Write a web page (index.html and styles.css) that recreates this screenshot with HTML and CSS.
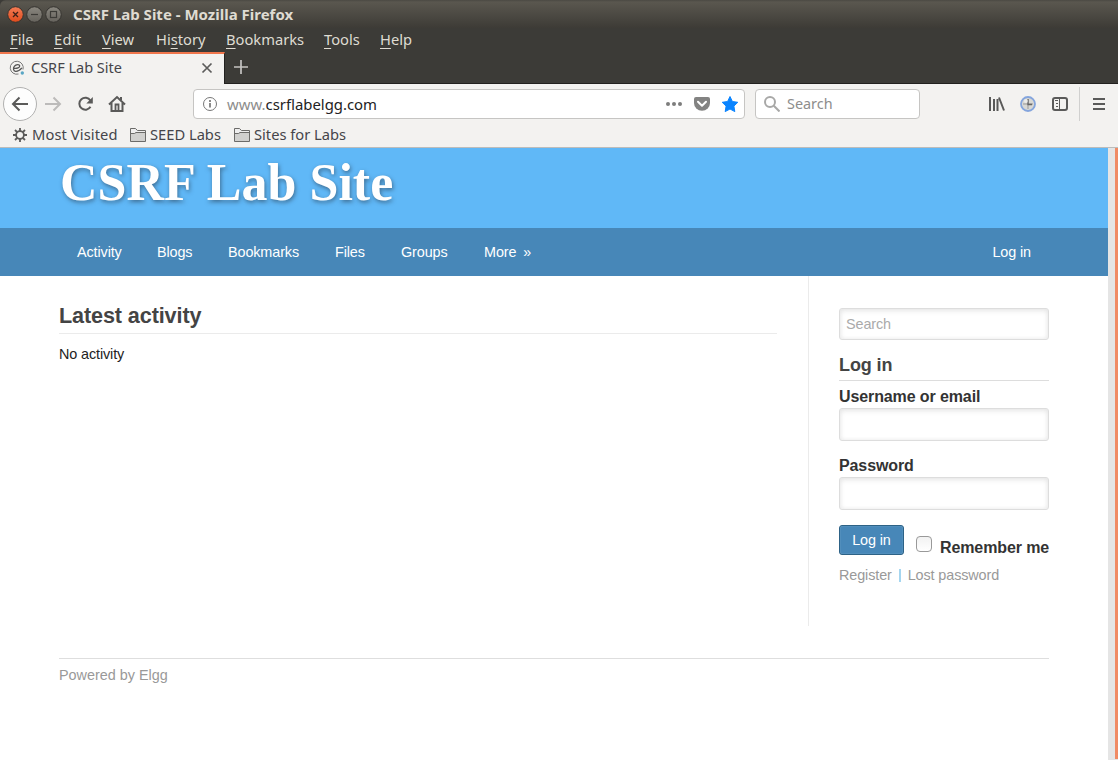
FILE: index.html
```html
<!DOCTYPE html>
<html lang="en">
<head>
<meta charset="utf-8">
<title>CSRF Lab Site</title>
<link rel="stylesheet" href="styles.css">
</head>
<body>
<div class="window">
  <header class="titlebar">
    <svg class="controls" width="60" height="20" viewBox="0 0 60 20">
      <defs>
        <linearGradient id="close" x1="0" y1="0" x2="0" y2="1"><stop offset="0" stop-color="#f47c55"/><stop offset="1" stop-color="#df4b1c"/></linearGradient>
        <linearGradient id="grey" x1="0" y1="0" x2="0" y2="1"><stop offset="0" stop-color="#8b8880"/><stop offset="1" stop-color="#65625c"/></linearGradient>
      </defs>
      <circle cx="11.500" cy="10.500" r="7.800" fill="url(#close)" stroke="#35332f"/>
      <path d="M9 8l5 5M14 8l-5 5" stroke="#3c2018" stroke-width="1.300"/>
      <circle cx="30.500" cy="10.500" r="7.800" fill="url(#grey)" stroke="#35332f"/>
      <path d="M27 10.500h7" stroke="#3c3b37" stroke-width="1.200"/>
      <circle cx="49.500" cy="10.500" r="7.800" fill="url(#grey)" stroke="#35332f"/>
      <rect x="46.500" y="7.500" width="6" height="6" fill="none" stroke="#3c3b37" stroke-width="1.200"/>
    </svg>
    <span class="window-title">CSRF Lab Site - Mozilla Firefox</span>
  </header>
  <nav class="menubar">
    <span class="m-file"><u>F</u>ile</span><span class="m-edit"><u>E</u>dit</span><span class="m-view"><u>V</u>iew</span><span class="m-history">Hi<u>s</u>tory</span><span class="m-bookmarks"><u>B</u>ookmarks</span><span class="m-tools"><u>T</u>ools</span><span class="m-help"><u>H</u>elp</span>
  </nav>
  <div class="tabs">
    <div class="tab">
      <svg width="16" height="16" viewBox="0 0 16 16" fill="none">
        <path d="M14 9.500A6.500 6.500 0 1 0 9.500 14" stroke="#777" stroke-width="1"/>
        <path d="M5 8.300c3 .5 6-.7 5.700-2.500C10.400 4 7 4.300 5.500 6.200 3.800 8.300 4.300 11 6.500 11.300c2.300.3 4.500-1.300 6.400-3.500" stroke="#555" stroke-width="1.300"/>
        <circle cx="13.300" cy="13" r="1.700" fill="#5aa6c4"/>
      </svg>
      <span class="tab-title">CSRF Lab Site</span>
      <svg width="12" height="12" viewBox="0 0 12 12"><path d="M1.500 1.500l9 9M10.500 1.500l-9 9" stroke="#5c5c5b" stroke-width="1.700"/></svg>
    </div>
    <svg class="new-tab" width="14" height="14" viewBox="0 0 14 14"><path d="M7 0v14M0 7h14" stroke="#c5c4c1" stroke-width="1.700"/></svg>
  </div>
  <div class="toolbar">
    <svg class="nav-icons" width="132" height="38" viewBox="0 0 132 38" fill="none" stroke="#5a5a59" stroke-width="2">
      <circle cx="20" cy="19" r="16.500" fill="#fdfdfd" stroke="#b1b1b0" stroke-width="1"/>
      <path d="M28 19H13M19.500 12.500L13 19l6.500 6.500"/>
      <path d="M45 19h15M53.500 12.500L60 19l-6.500 6.500" stroke="#bcbbba"/>
      <path d="M90.400 15.500A6 6 0 1 0 90.500 21.800"/><path d="M92.800 12v6.500h-6.500z" fill="#5a5a59" stroke="none"/>
      <path d="M109 19.500L117 12l8 7.500M111.500 18v8h11v-8"/><path d="M115.500 26v-6.500h3V26" stroke-width="1.800"/><path d="M121 12v3" stroke-width="2"/>
    </svg>
    <div class="urlbar">
      <svg width="16" height="16" viewBox="0 0 16 16" fill="none"><circle cx="8" cy="8" r="6.500" stroke="#777"/><path d="M8 7v4.500M8 4v2" stroke="#777" stroke-width="1.700"/></svg>
      <span class="url"><span class="sub">www.</span>csrflabelgg.com</span>
      <svg width="76" height="20" viewBox="0 0 76 20">
        <g fill="#7d7d7c"><circle cx="4" cy="10" r="2"/><circle cx="10" cy="10" r="2"/><circle cx="16" cy="10" r="2"/>
        <path d="M32 3h12a2 2 0 0 1 2 2v4a8 7.800 0 0 1-16 0V5a2 2 0 0 1 2-2z" fill="#838382"/></g>
        <path d="M34 7.700l4 4 4-4" fill="none" stroke="#fff" stroke-width="2" stroke-linecap="round" stroke-linejoin="round"/>
        <path d="M66 2.500l2.400 5 5.400.8-3.900 3.800.9 5.500L66 15l-4.800 2.600.9-5.500-3.900-3.800 5.400-.8z" fill="#0a84ff" stroke="#0a84ff" stroke-linejoin="round"/>
      </svg>
    </div>
    <div class="searchbar">
      <svg width="16" height="16" viewBox="0 0 16 16" fill="none" stroke="#a8a8a7" stroke-width="2"><circle cx="6" cy="6" r="5"/><path d="M9.800 9.800l5.700 5.700"/></svg>
      <span>Search</span>
    </div>
    <svg class="actions" width="138" height="34" viewBox="0 0 138 34">
      <path d="M10 10v14M14 12v12M17.500 12v12M19 10.500l5 13" stroke="#5a5a59" stroke-width="2"/>
      <circle cx="48" cy="17" r="7" fill="#d8d8d4" stroke="#84a5dd" stroke-width="1.800"/>
      <path d="M48 12v10M43 17h10" stroke="#999" stroke-width="1"/><path d="M48 12v5.500h4" fill="none" stroke="#666" stroke-width="1.300"/><circle cx="46" cy="14" r="2" fill="#f5f5f2" opacity=".7"/>
      <rect x="73" y="11" width="14" height="12" rx="2" fill="none" stroke="#5a5a59" stroke-width="2"/>
      <path d="M79.500 11v12" stroke="#5a5a59"/><path d="M75 13.500h3M76 16.500h2M76 19.500h2" stroke="#5a5a59"/>
      <path d="M99.500 0v34" stroke="#d0d0cf"/>
      <path d="M113 12h12M113 17h12M113 22h12" stroke="#5a5a59" stroke-width="2"/>
    </svg>
  </div>
  <div class="bookmarks">
    <svg class="gear" width="14" height="14" viewBox="0 0 14 14" fill="none" stroke="#5a5a59"><circle cx="7" cy="7" r="3.900" stroke-width="1.800"/><path d="M7 0v3M7 11v3M0 7h3M11 7h3M2 2l2.200 2.200M9.800 9.800L12 12M12 2L9.800 4.200M4.200 9.800L2 12" stroke-width="1.800"/></svg>
    <span class="b-most">Most Visited</span>
    <svg class="folder" width="16" height="14" viewBox="0 0 16 14"><path d="M.5 13.500V.5h5l2 2h8v11z" fill="#d0d0ce" stroke="#6b6b69"/><path d="M1 1h4.300l2 2H15v1H6L4.500 5H1z" fill="#eee"/><path d="M1 5.500h3.500l1.500-1h9.500" fill="none" stroke="#6b6b69"/></svg>
    <span class="b-seed">SEED Labs</span>
    <svg class="folder" width="16" height="14" viewBox="0 0 16 14"><path d="M.5 13.500V.5h5l2 2h8v11z" fill="#d0d0ce" stroke="#6b6b69"/><path d="M1 1h4.300l2 2H15v1H6L4.500 5H1z" fill="#eee"/><path d="M1 5.500h3.500l1.500-1h9.500" fill="none" stroke="#6b6b69"/></svg>
    <span class="b-sites">Sites for Labs</span>
  </div>
  <div class="viewport">
    <div class="page">
      <div class="banner"><h1>CSRF Lab Site</h1></div>
      <nav class="site-nav">
        <a class="n-activity">Activity</a><a class="n-blogs">Blogs</a><a class="n-bookmarks">Bookmarks</a><a class="n-files">Files</a><a class="n-groups">Groups</a><a class="n-more">More <span class="raquo">»</span></a><a class="login-link">Log in</a>
      </nav>
      <div class="columns">
        <main><h2>Latest activity</h2><p>No activity</p></main>
        <aside>
          <div class="field search">Search</div>
          <h3>Log in</h3>
          <label class="username">Username or email</label>
          <div class="field"></div>
          <label class="password">Password</label>
          <div class="field"></div>
          <div class="submit-row"><span class="button">Log in</span><span class="checkbox"></span><label class="remember">Remember me</label></div>
          <div class="links"><span>Register</span><i></i><span>Lost password</span></div>
        </aside>
      </div>
      <footer>Powered by Elgg</footer>
    </div>
    <div class="scroll"><div class="thumb"></div></div>
  </div>
</div>
</body>
</html>
```
FILE: styles.css
```css
* { box-sizing: border-box; }
body { margin: 0; overflow: hidden; background: #fff; }
svg { display: block; flex: none; }
.window { width: 1118px; height: 760px; display: flex; flex-direction: column; font: 14.7px/20px "Noto Sans", sans-serif; background: #3c3b37; color: #45454a; white-space: nowrap; }

.titlebar { height: 28px; flex: none; display: flex; padding: 4px 0 0 4px; background: linear-gradient(#4b4943, #5a574f 2px, #3d3b36); border-radius: 6px 0 0; }
.window-title { margin-left: 9px; font-size: 15px; font-weight: 700; color: #dfdbd2; }
.menubar { height: 24px; flex: none; display: flex; padding: 1px 0 0 10px; color: #dfdbd2; }
.menubar u { text-underline-offset: 3px; text-decoration-thickness: 1px; }
.m-file { width: 44px; }
.m-edit { width: 48px; letter-spacing: .3px; }
.m-view { width: 54px; }
.m-history { width: 70px; }
.m-bookmarks { width: 98px; }
.m-tools { width: 56px; }

.tabs { height: 32px; flex: none; display: flex; box-shadow: inset 0 -1px #22211f; }
.tab { width: 225px; padding: 0 11px 2px 9px; display: flex; align-items: center; background: #f3f2f0; border-top: 2px solid #f0764c; border-right: 1px solid #22211f; }
.tab-title { flex: 1; margin-left: 6px; padding-bottom: 2px; font-size: 14.5px; }
.new-tab { margin: 8px 0 0 9px; }

.toolbar { height: 39px; flex: none; display: flex; background: #f3f2f0; padding-top: 1px; }
.nav-icons { width: 132px; margin-right: 61px; }
.urlbar, .searchbar { height: 30px; margin-top: 4px; background: #fff; border: 1px solid #c6c5c3; border-radius: 4px; display: flex; align-items: center; }
.urlbar { width: 552px; padding: 0 4px 0 8px; }
.url { flex: 1; margin-left: 9px; color: #222; font-size: 14.9px; }
.sub { color: #8d8d8c; }
.searchbar { width: 165px; margin-left: 10px; padding-left: 8px; color: #8d8d8c; }
.searchbar span { margin-left: 7px; font-size: 14.4px; }
.actions { margin: 2px 0 0 60px; }
.bookmarks { height: 25px; flex: none; display: flex; padding: 1px 0 0 13px; background: #f3f2f0; border-bottom: 1px solid #bcbcbb; }
.gear { margin: 4px 5px 0 0; }
.folder { margin: 4px 4px 0 0; }
.b-most { width: 98px; letter-spacing: .1px; }
.b-seed { width: 84px; }

.viewport { flex: 1; display: flex; min-height: 0; }
.page { width: 1108px; background: #fff; font: 14.4px/20px "Liberation Sans", Arial, sans-serif; letter-spacing: -.11px; color: #222; }
.scroll { width: 10px; background: #e5e5e5; padding-left: 7px; }
.thumb { height: 611px; background: #f08b65; }
.banner { height: 80px; background: #60b8f7; padding: 6px 60px; }
h1 { margin: 0; font: bold 52px/58px "Liberation Serif", "Times New Roman", serif; letter-spacing: 0; color: #fff; text-shadow: 1px 2px 4px rgba(40,60,80,.6); }
.site-nav { height: 48px; display: flex; padding: 14px 77px 0; background: #4787b8; color: #fff; }
.n-activity { width: 80px; }
.n-blogs { width: 71px; }
.n-bookmarks { width: 107px; }
.n-files { width: 66px; }
.n-groups { width: 83px; }
.raquo { margin-left: 3px; }
.login-link { margin-left: auto; }
.columns { height: 350px; display: flex; padding: 0 59px; }
main { width: 718px; padding-top: 25px; }
h2 { margin: 0; height: 33px; font-size: 21.6px; line-height: 29px; color: #444; border-bottom: 1px solid #ebebeb; }
p { margin: 10px 0 0; }
aside { width: 241px; margin-left: 31px; padding: 32px 0 0 30px; border-left: 1px solid #ebebeb; }
.field { height: 33px; border: 1px solid #ddd; border-radius: 3px; box-shadow: inset 0 2px 6px -1px #e3e3e3, inset 0 0 4px #eee; background: #fff; }
.search { height: 32px; padding: 5px 6px; color: #aaa; }
h3 { margin: 15px 0 5px; height: 26px; font-size: 18px; line-height: 20px; color: #444; border-bottom: 1px solid #ddd; }
label { display: block; font-weight: bold; font-size: 16px; line-height: 21px; color: #333; }
.username { margin-bottom: 1px; }
.password { margin: 14px 0 1px; }
.submit-row { height: 30px; margin-top: 15px; display: flex; }
.button { flex: none; width: 65px; height: 30px; line-height: 28px; text-align: center; color: #fff; background: #4787b8; border: 1px solid #2d6286; border-radius: 3px; box-shadow: inset 0 0 1px rgba(255,255,255,.6); }
.checkbox { flex: none; width: 16px; height: 16px; margin: 11px 8px 0 12px; border: 1px solid #999; border-radius: 4px; background: linear-gradient(#f2f2f2, #fff); }
.remember { margin-top: 12px; }
.links { display: flex; align-items: center; margin-top: 10px; color: #999; }
.links i { flex: none; width: 2px; height: 13px; margin: 0 7px; background: #a5d6f0; }
footer { margin: 32px 59px 0; padding-top: 6px; border-top: 1px solid #dedede; color: #999; letter-spacing: 0; }
```
